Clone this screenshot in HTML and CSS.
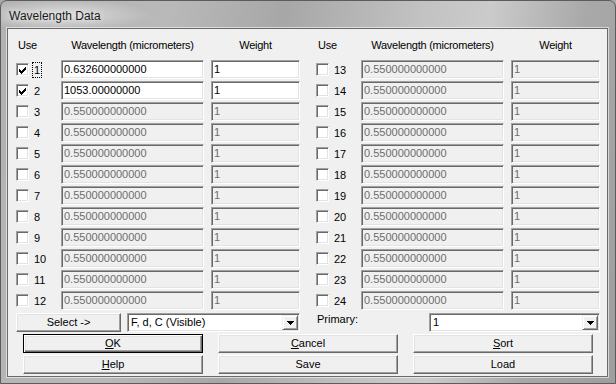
FILE: index.html
```html
<!DOCTYPE html>
<html>
  <head>
    <title>Wavelength Data</title>
    <link rel="stylesheet" href="styles.css">
  </head>
  <body>
    <div class="window">
      <div class="titlebar"><span class="title">Wavelength Data</span></div>
      <div class="client">
        <div class="groups">
          <div class="group">
            <span class="head head-use">Use</span>
            <span class="head">Wavelength (micrometers)</span>
            <span class="head">Weight</span>

            <span class="use"><span class="check"><svg viewBox="0 0 9 9" width="9" height="9"><path d="M1 4h1v3h-1zM2 5h1v3h-1zM3 6h1v3h-1zM4 5h1v3h-1zM5 4h1v3h-1zM6 3h1v3h-1zM7 2h1v3h-1z"/></svg></span><span class="num focus">1</span></span>
            <span class="field">0.632600000000</span>
            <span class="field">1</span>

            <span class="use"><span class="check"><svg viewBox="0 0 9 9" width="9" height="9"><path d="M1 4h1v3h-1zM2 5h1v3h-1zM3 6h1v3h-1zM4 5h1v3h-1zM5 4h1v3h-1zM6 3h1v3h-1zM7 2h1v3h-1z"/></svg></span><span class="num">2</span></span>
            <span class="field">1053.00000000</span>
            <span class="field">1</span>

            <span class="use"><span class="check"></span><span class="num">3</span></span>
            <span class="field off">0.550000000000</span>
            <span class="field off">1</span>

            <span class="use"><span class="check"></span><span class="num">4</span></span>
            <span class="field off">0.550000000000</span>
            <span class="field off">1</span>

            <span class="use"><span class="check"></span><span class="num">5</span></span>
            <span class="field off">0.550000000000</span>
            <span class="field off">1</span>

            <span class="use"><span class="check"></span><span class="num">6</span></span>
            <span class="field off">0.550000000000</span>
            <span class="field off">1</span>

            <span class="use"><span class="check"></span><span class="num">7</span></span>
            <span class="field off">0.550000000000</span>
            <span class="field off">1</span>

            <span class="use"><span class="check"></span><span class="num">8</span></span>
            <span class="field off">0.550000000000</span>
            <span class="field off">1</span>

            <span class="use"><span class="check"></span><span class="num">9</span></span>
            <span class="field off">0.550000000000</span>
            <span class="field off">1</span>

            <span class="use"><span class="check"></span><span class="num">10</span></span>
            <span class="field off">0.550000000000</span>
            <span class="field off">1</span>

            <span class="use"><span class="check"></span><span class="num">11</span></span>
            <span class="field off">0.550000000000</span>
            <span class="field off">1</span>

            <span class="use"><span class="check"></span><span class="num">12</span></span>
            <span class="field off">0.550000000000</span>
            <span class="field off">1</span>
          </div>

          <div class="group">
            <span class="head head-use">Use</span>
            <span class="head">Wavelength (micrometers)</span>
            <span class="head">Weight</span>

            <span class="use"><span class="check"></span><span class="num">13</span></span>
            <span class="field off">0.550000000000</span>
            <span class="field off">1</span>

            <span class="use"><span class="check"></span><span class="num">14</span></span>
            <span class="field off">0.550000000000</span>
            <span class="field off">1</span>

            <span class="use"><span class="check"></span><span class="num">15</span></span>
            <span class="field off">0.550000000000</span>
            <span class="field off">1</span>

            <span class="use"><span class="check"></span><span class="num">16</span></span>
            <span class="field off">0.550000000000</span>
            <span class="field off">1</span>

            <span class="use"><span class="check"></span><span class="num">17</span></span>
            <span class="field off">0.550000000000</span>
            <span class="field off">1</span>

            <span class="use"><span class="check"></span><span class="num">18</span></span>
            <span class="field off">0.550000000000</span>
            <span class="field off">1</span>

            <span class="use"><span class="check"></span><span class="num">19</span></span>
            <span class="field off">0.550000000000</span>
            <span class="field off">1</span>

            <span class="use"><span class="check"></span><span class="num">20</span></span>
            <span class="field off">0.550000000000</span>
            <span class="field off">1</span>

            <span class="use"><span class="check"></span><span class="num">21</span></span>
            <span class="field off">0.550000000000</span>
            <span class="field off">1</span>

            <span class="use"><span class="check"></span><span class="num">22</span></span>
            <span class="field off">0.550000000000</span>
            <span class="field off">1</span>

            <span class="use"><span class="check"></span><span class="num">23</span></span>
            <span class="field off">0.550000000000</span>
            <span class="field off">1</span>

            <span class="use"><span class="check"></span><span class="num">24</span></span>
            <span class="field off">0.550000000000</span>
            <span class="field off">1</span>
          </div>
        </div>

        <div class="select-row">
          <span class="btn btn-select">Select -&gt;</span>
          <span class="combo combo-set">
            <span class="combo-text">F, d, C (Visible)</span>
            <span class="drop"><svg viewBox="0 0 7 4" width="7" height="4"><path d="M0 0h7v1h-7zM1 1h5v1h-5zM2 2h3v1h-3zM3 3h1v1h-1z"/></svg></span>
          </span>
          <span class="primary">Primary:</span>
          <span class="combo combo-primary">
            <span class="combo-text">1</span>
            <span class="drop"><svg viewBox="0 0 7 4" width="7" height="4"><path d="M0 0h7v1h-7zM1 1h5v1h-5zM2 2h3v1h-3zM3 3h1v1h-1z"/></svg></span>
          </span>
        </div>

        <div class="actions">
          <span class="btn btn-default"><u>O</u>K</span>
          <span class="btn"><u>C</u>ancel</span>
          <span class="btn"><u>S</u>ort</span>
          <span class="btn"><u>H</u>elp</span>
          <span class="btn">Save</span>
          <span class="btn">Load</span>
        </div>
      </div>
    </div>
  </body>
</html>
```

FILE: styles.css
```css
body {
  margin: 0;
  background-color: #a8a8a8;
  font-family: "Liberation Sans", Arial, sans-serif;
  font-size: 11px;
  color: #000;
}
.window {
  width: 616px;
  height: 384px;
  box-sizing: border-box;
  border: 1px solid #5c5c5c;
  border-radius: 7px 7px 0 0;
  /* grey aero frame with soft light streaks */
  background:
    radial-gradient(ellipse 90px 16px at 60px 14px, rgba(235, 235, 235, 0.75), rgba(235, 235, 235, 0)),
    linear-gradient(100deg, #b2b2b2 0%, #b9b9b9 25%, #a7a7a7 42%, #c2c2c2 62%, #cbcbcb 72%, #a9a9a9 86%, #9e9e9e 100%);
  display: flex;
  flex-direction: column;
  overflow: hidden;
}
.titlebar {
  height: 27px;
  box-sizing: border-box;
  padding: 3px 0 0 8px;
  line-height: 24px;
}
.title {
  font-size: 12px;
  color: #1a1a1a;
  text-shadow: 0 0 6px rgba(255, 255, 255, 0.9);
}
.client {
  flex: 1;
  margin: 0 7px 6px 6px;
  border: 1px solid #6a6a6a;
  box-shadow: 0 0 0 1px rgba(255, 255, 255, 0.55);
  background-color: #f0f0f0;
  padding-top: 10px;
}
.groups {
  display: flex;
  gap: 16px;
  padding-left: 8px;
}
.group {
  display: grid;
  grid-template-columns: 38px 143px 89px;
  grid-auto-rows: 19px;
  column-gap: 7px;
  row-gap: 2px;
}
.head {
  line-height: 13px;
  text-align: center;
  white-space: nowrap;
  letter-spacing: -0.25px;
}
.head-use {
  text-align: left;
  padding-left: 2px;
}
.use {
  display: flex;
  align-items: center;
}
/* classic sunken edge, shared by check boxes, fields and combos */
.check,
.field,
.combo {
  box-sizing: border-box;
  border: 1px solid;
  border-color: #a0a0a0 #fff #fff #a0a0a0;
  box-shadow: inset 1px 1px #696969, inset -1px -1px #e3e3e3;
}
.check {
  width: 13px;
  height: 13px;
  background-color: #fff;
  padding: 1px;
}
.check svg {
  display: block;
  shape-rendering: crispEdges;
}
.num {
  margin-left: 4px;
  padding: 0 1px;
  line-height: 14px;
}
.focus {
  outline: 1px dotted #000;
}
.field {
  display: block;
  height: 19px;
  padding: 0 2px;
  line-height: 17px;
  background-color: #fff;
  white-space: nowrap;
  overflow: hidden;
}
.field.off {
  background-color: #f0f0f0;
  color: #6d6d6d;
}
.select-row {
  display: flex;
  align-items: flex-start;
  margin-top: 3px;
  padding-left: 8px;
  height: 19px;
}
.btn {
  display: block;
  box-sizing: border-box;
  height: 19px;
  border: 1px solid;
  border-color: #fff #696969 #696969 #fff;
  box-shadow: inset -1px -1px #a0a0a0, inset 1px 1px #e3e3e3;
  background-color: #f0f0f0;
  line-height: 17px;
  text-align: center;
}
.btn-default {
  border-color: #000;
  box-shadow: inset 1px 1px #fff, inset -1px -1px #696969, inset -2px -2px #a0a0a0, inset 2px 2px #e3e3e3;
}
.btn-select {
  width: 105px;
  margin-right: 6px;
}
.combo {
  display: flex;
  height: 19px;
  background-color: #fff;
}
.combo-set {
  width: 173px;
}
.combo-primary {
  width: 171px;
}
.combo-text {
  flex: 1;
  padding-left: 3px;
  line-height: 17px;
}
.drop {
  box-sizing: border-box;
  width: 16px;
  height: 15px;
  margin: 1px;
  border: 1px solid;
  border-color: #f0f0f0 #696969 #696969 #f0f0f0;
  box-shadow: inset 1px 1px #fff, inset -1px -1px #a0a0a0;
  background-color: #f0f0f0;
  display: flex;
  align-items: center;
  justify-content: center;
}
.drop svg {
  display: block;
  margin-top: 1px;
  shape-rendering: crispEdges;
}
.primary {
  width: 112px;
  margin-left: 16px;
  padding-left: 1px;
  line-height: 13px;
}
.actions {
  display: grid;
  grid-template-columns: repeat(3, 180px);
  column-gap: 15px;
  row-gap: 2px;
  margin-top: 2px;
  padding-left: 15px;
}
```
